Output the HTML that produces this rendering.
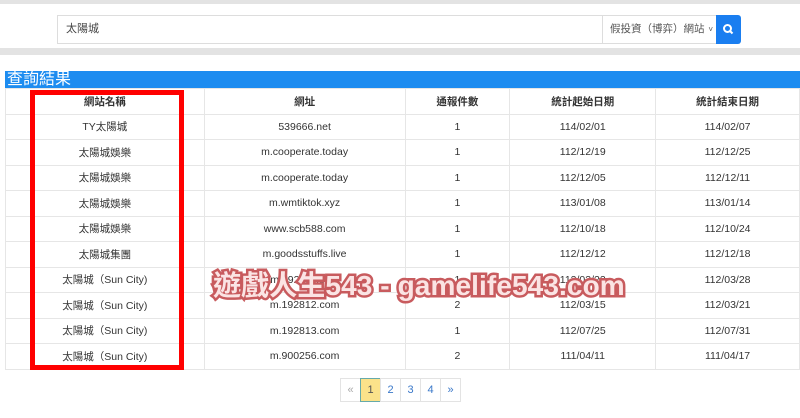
<!DOCTYPE html>
<html><head><meta charset="utf-8"><style>
*{box-sizing:border-box;margin:0;padding:0}
body{width:800px;height:418px;background:#fff;position:relative;overflow:hidden;font-family:"Liberation Sans","Noto Sans CJK TC",sans-serif;color:#333}
.bar1{position:absolute;left:0;top:0;width:800px;height:4px;background:#e3e3e3}
.bar2{position:absolute;left:0;top:48px;width:800px;height:7px;background:#e3e3e3}
.inp{position:absolute;left:57px;top:15px;width:546px;height:29px;border:1px solid #ddd;border-right:none;font-size:11px;line-height:27px;padding-left:8px;color:#444}
.sel{position:absolute;left:602px;top:15px;width:115px;height:29px;border:1px solid #ddd;font-size:10.5px;line-height:27px;padding-left:7px;color:#555;white-space:nowrap}
.sel span{position:absolute;right:3px;top:0;font-size:8px}
.btn{position:absolute;left:716px;top:15px;width:25px;height:29px;background:#1a7ef0;border-radius:0 3px 3px 0}
.hd{position:absolute;left:5px;top:71px;width:795px;height:17px;background:#1d8cf0;color:#fff;font-size:16px;line-height:17px;padding-left:2px}
table{position:absolute;left:5px;top:88px;width:795px;border-collapse:collapse;font-size:10.5px;text-align:center}
td,th{border:1px solid #e6e6e6;height:25.5px;padding:0;color:#333}
th{font-weight:bold;font-size:10.5px}
.red{position:absolute;left:30px;top:90px;width:154px;height:280px;border:5px solid #f00}
.wm{position:absolute;left:213px;top:264px;font-size:28px;font-weight:bold;color:#fbe4e4;-webkit-text-stroke:5px #c85b5e;paint-order:stroke fill;white-space:nowrap;letter-spacing:0.1px;font-family:"Liberation Sans","Noto Sans CJK TC",sans-serif}
.pg{position:absolute;left:341px;top:378px;display:flex;font-size:11px}
.pg div{width:21px;height:24px;border:1px solid #e3e3e3;margin-left:-1px;text-align:center;line-height:22px;color:#3a78c9}
.pg .a{background:#fbe28a;border-color:#6aa;color:#555}
.pg .g{color:#aaa}
</style></head><body>
<div class="bar1"></div>
<div class="inp">太陽城</div>
<div class="sel">假投資（博弈）網站<span>˅</span></div>
<div class="btn"><svg width="25" height="29" viewBox="0 0 25 29"><circle cx="11.5" cy="13.5" r="3.5" fill="none" stroke="#fff" stroke-width="2"/><line x1="14" y1="16" x2="16.5" y2="18.5" stroke="#fff" stroke-width="2"/></svg></div>
<div class="bar2"></div>
<div class="hd">查詢結果</div>
<table>
<colgroup><col style="width:199px"><col style="width:201px"><col style="width:105px"><col style="width:146px"><col style="width:144px"></colgroup>
<tr><th>網站名稱</th><th>網址</th><th>通報件數</th><th>統計起始日期</th><th>統計結束日期</th></tr>
<tr><td>TY太陽城</td><td>539666.net</td><td>1</td><td>114/02/01</td><td>114/02/07</td></tr>
<tr><td>太陽城娛樂</td><td>m.cooperate.today</td><td>1</td><td>112/12/19</td><td>112/12/25</td></tr>
<tr><td>太陽城娛樂</td><td>m.cooperate.today</td><td>1</td><td>112/12/05</td><td>112/12/11</td></tr>
<tr><td>太陽城娛樂</td><td>m.wmtiktok.xyz</td><td>1</td><td>113/01/08</td><td>113/01/14</td></tr>
<tr><td>太陽城娛樂</td><td>www.scb588.com</td><td>1</td><td>112/10/18</td><td>112/10/24</td></tr>
<tr><td>太陽城集團</td><td>m.goodsstuffs.live</td><td>1</td><td>112/12/12</td><td>112/12/18</td></tr>
<tr><td>太陽城（Sun City)</td><td>m.192811.com</td><td>1</td><td>112/03/22</td><td>112/03/28</td></tr>
<tr><td>太陽城（Sun City)</td><td>m.192812.com</td><td>2</td><td>112/03/15</td><td>112/03/21</td></tr>
<tr><td>太陽城（Sun City)</td><td>m.192813.com</td><td>1</td><td>112/07/25</td><td>112/07/31</td></tr>
<tr><td>太陽城（Sun City)</td><td>m.900256.com</td><td>2</td><td>111/04/11</td><td>111/04/17</td></tr>
</table>
<div class="red"></div>
<div class="wm">遊戲人生543 - gamelife543.com</div>
<div class="pg"><div class="g">«</div><div class="a">1</div><div>2</div><div>3</div><div>4</div><div>»</div></div>
</body></html>
